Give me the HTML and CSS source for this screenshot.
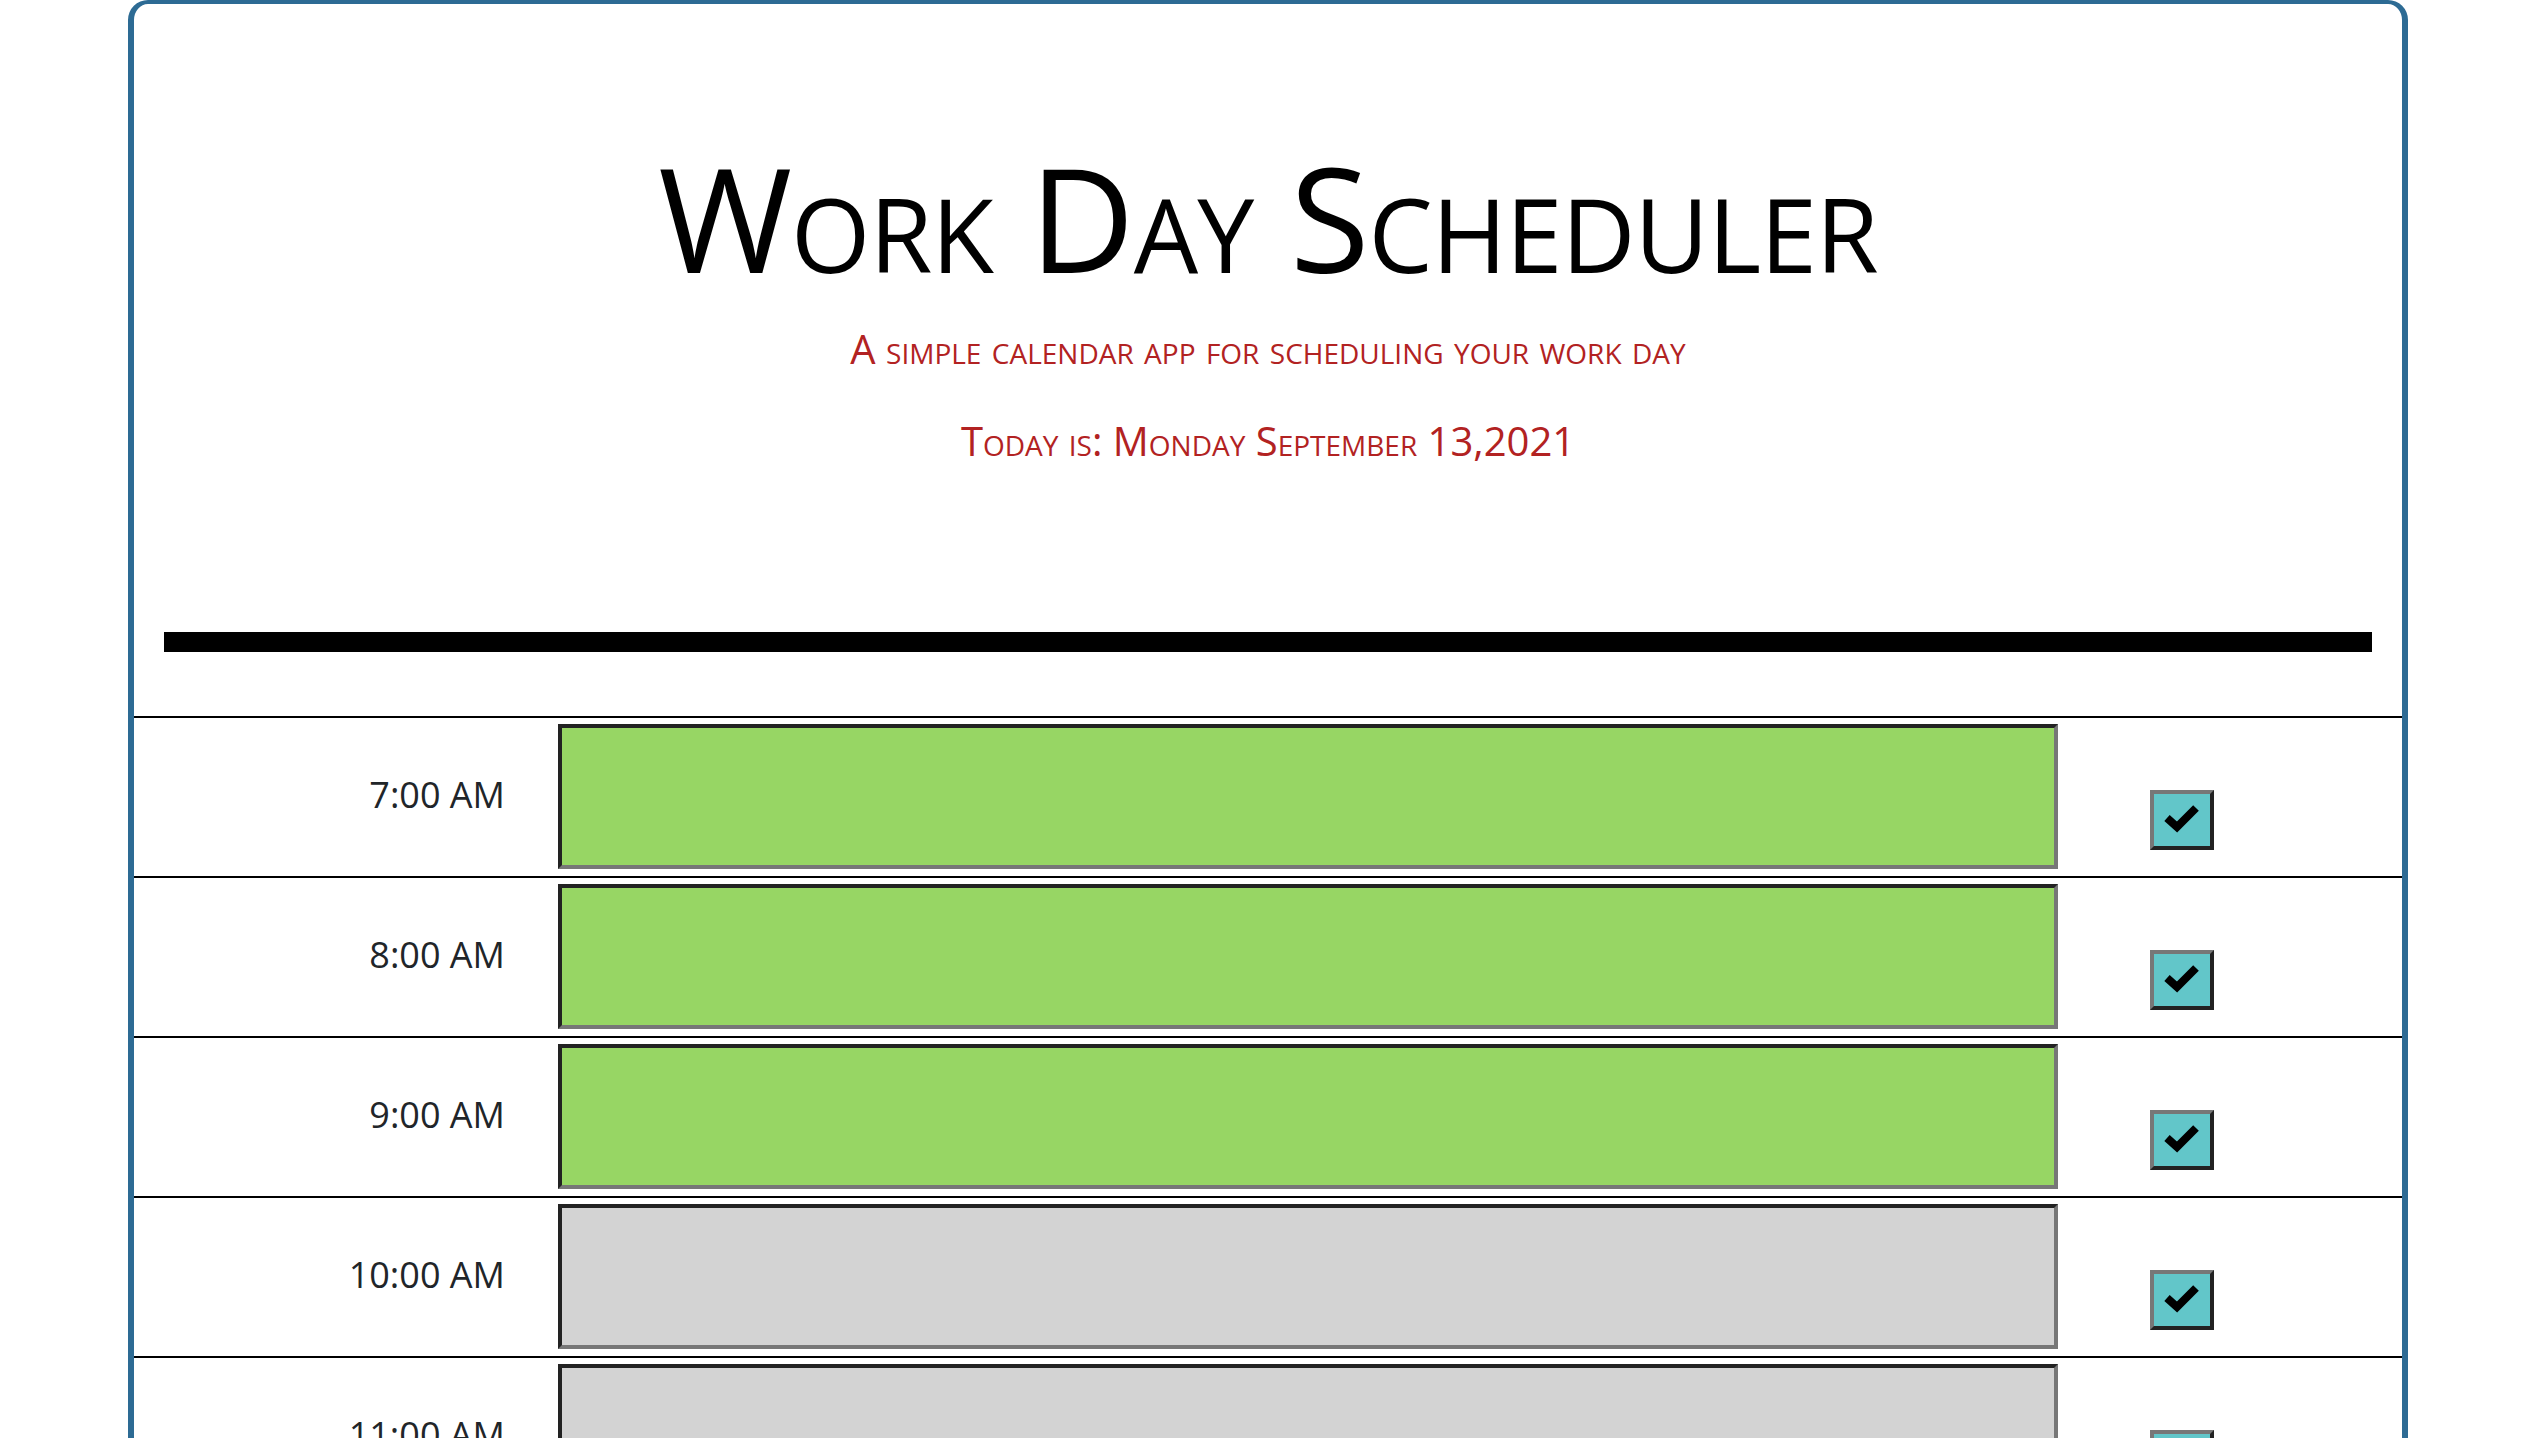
FILE: index.html
```html
<!DOCTYPE html>
<html lang="en">
<head>
<meta charset="utf-8">
<title>Work Day Scheduler</title>
<link rel="stylesheet" href="styles.css">
</head>
<body>
<div class="container">
  <header class="jumbotron">
    <h1 class="title">Work Day Scheduler</h1>
    <p class="lead">A simple calendar app for scheduling your work day</p>
    <p class="today">Today is: Monday September 13,2021</p>
    <div class="rule"></div>
  </header>
  <main class="schedule">
    <div class="time-block">
      <div class="hour">7:00 AM</div>
      <textarea class="task future"></textarea>
      <button class="save" type="button" aria-label="save"><svg viewBox="0 0 56 52" width="56" height="52"><polyline points="13,24 23,33 42,14" fill="none" stroke="#000" stroke-width="8"/></svg></button>
    </div>
    <div class="time-block">
      <div class="hour">8:00 AM</div>
      <textarea class="task future"></textarea>
      <button class="save" type="button" aria-label="save"><svg viewBox="0 0 56 52" width="56" height="52"><polyline points="13,24 23,33 42,14" fill="none" stroke="#000" stroke-width="8"/></svg></button>
    </div>
    <div class="time-block">
      <div class="hour">9:00 AM</div>
      <textarea class="task future"></textarea>
      <button class="save" type="button" aria-label="save"><svg viewBox="0 0 56 52" width="56" height="52"><polyline points="13,24 23,33 42,14" fill="none" stroke="#000" stroke-width="8"/></svg></button>
    </div>
    <div class="time-block">
      <div class="hour">10:00 AM</div>
      <textarea class="task past"></textarea>
      <button class="save" type="button" aria-label="save"><svg viewBox="0 0 56 52" width="56" height="52"><polyline points="13,24 23,33 42,14" fill="none" stroke="#000" stroke-width="8"/></svg></button>
    </div>
    <div class="time-block">
      <div class="hour">11:00 AM</div>
      <textarea class="task past"></textarea>
      <button class="save" type="button" aria-label="save"><svg viewBox="0 0 56 52" width="56" height="52"><polyline points="13,24 23,33 42,14" fill="none" stroke="#000" stroke-width="8"/></svg></button>
    </div>
    <div class="time-block">
      <div class="hour">12:00 PM</div>
      <textarea class="task past"></textarea>
      <button class="save" type="button" aria-label="save"><svg viewBox="0 0 56 52" width="56" height="52"><polyline points="13,24 23,33 42,14" fill="none" stroke="#000" stroke-width="8"/></svg></button>
    </div>
  </main>
</div>
</body>
</html>
```

FILE: styles.css
```css
html, body {
  margin: 0;
  padding: 0;
  background: #ffffff;
}

body {
  font-family: "Open Sans", "Liberation Sans", sans-serif;
  color: #212529;
  overflow: hidden;
}

.container {
  box-sizing: border-box;
  width: 2280px;
  margin: 0 auto;
  border: 6px solid #2d6b94;
  border-top-width: 4px;
  border-radius: 20px;
  min-height: 1500px;
  background: #ffffff;
}

.jumbotron {
  text-align: center;
  padding-top: 113px;
  padding-bottom: 64px;
}

.title {
  margin: 0;
  font-size: 145px;
  font-weight: 400;
  font-variant: small-caps;
  letter-spacing: -1px;
  line-height: 200px;
  color: #000000;
}

.lead {
  margin: 5px 0 0;
  font-size: 40px;
  line-height: 54px;
  font-variant: small-caps;
  color: #b22222;
}

.today {
  margin: 38px 0 0;
  font-size: 40px;
  line-height: 54px;
  font-variant: small-caps;
  color: #b22222;
}

.rule {
  height: 20px;
  background: #000000;
  margin: 164px 30px 0;
}

.time-block {
  display: grid;
  grid-template-columns: 424px 1500px 1fr;
  border-top: 2px solid #000000;
  height: 160px;
  box-sizing: border-box;
}

.hour {
  align-self: center;
  text-align: right;
  padding-right: 53px;
  padding-bottom: 6px;
  font-size: 36px;
  line-height: 49px;
  color: #212529;
}

.task {
  box-sizing: border-box;
  margin: 6px 0 7px;
  height: 145px;
  border: 4px solid;
  border-color: #222222 #777777 #777777 #222222;
  resize: none;
  outline: none;
  padding: 0;
}

.future {
  background: #97d664;
}

.past {
  background: #d3d3d3;
}

.save {
  box-sizing: border-box;
  margin: 72px 0 0 92px;
  width: 64px;
  height: 60px;
  padding: 0;
  border: 4px solid;
  border-color: #777777 #222222 #222222 #777777;
  background: #62c6c9;
  display: flex;
  align-items: center;
  justify-content: center;
  align-self: start;
  justify-self: start;
}

.save svg {
  display: block;
}
```
